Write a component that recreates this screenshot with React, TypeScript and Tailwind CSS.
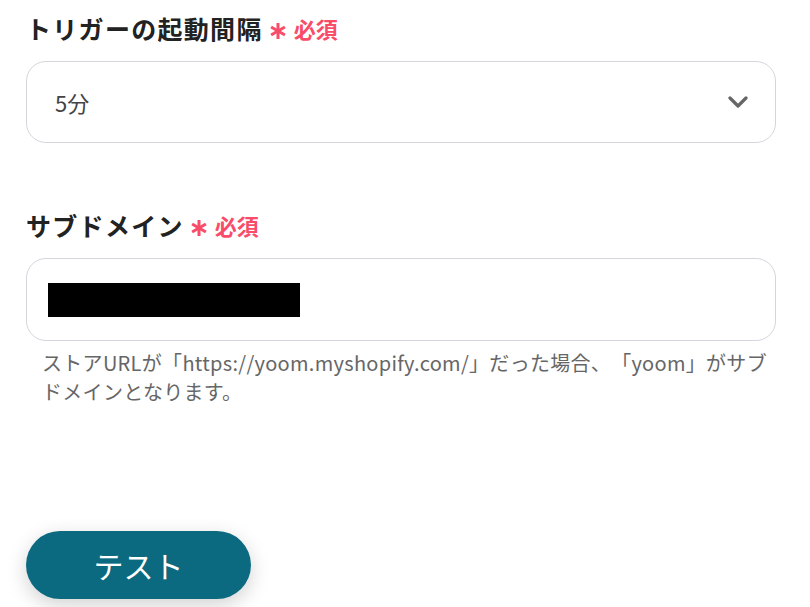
const jp = "font-['Noto_Sans_CJK_JP','Noto_Sans',sans-serif]";

function Required() {
  return (
    <span className="ml-[6px] flex items-center text-[#f84c69] font-bold">
      <svg width="18" height="18" viewBox="0 0 18 18" className="mt-[6px]">
        <g stroke="#f84c69" strokeWidth="3" strokeLinecap="butt">
          <line x1="9" y1="1" x2="9" y2="17" />
          <line x1="2.1" y1="5" x2="15.9" y2="13" />
          <line x1="15.9" y1="5" x2="2.1" y2="13" />
        </g>
      </svg>
      <span className="ml-[7px] text-[22px] leading-none">必須</span>
    </span>
  );
}

function Label({ text }: { text: string }) {
  return (
    <div className="flex items-center h-[36px]">
      <span className="text-[25px] font-bold text-[#222] leading-none tracking-[1.3px]">{text}</span>
      <Required />
    </div>
  );
}

export default function App() {
  return (
    <div className={`${jp} w-[810px] h-[607px] bg-white pl-[26px] pr-[34px] pt-[10px]`}>
      <Label text="トリガーの起動間隔" />
      <div className="mt-[15px] h-[82px] rounded-[20px] border border-[#d3d6dc] flex items-center justify-between pl-[28px] pr-[27px]">
        <span className="text-[22px] text-[#444]">5分</span>
        <svg width="20" height="12" viewBox="0 0 20 12" fill="none">
          <polyline points="2,2 10,10 18,2" stroke="#666" strokeWidth="3.2" strokeLinecap="round" strokeLinejoin="round" />
        </svg>
      </div>

      <div className="mt-[64px]">
        <Label text="サブドメイン" />
      </div>
      <div className="mt-[15px] h-[83px] rounded-[20px] border border-[#d3d6dc] flex items-center pl-[21px]">
        <div className="w-[252px] h-[34px] bg-black" />
      </div>
      <p className="mt-[7px] pl-[16px] text-[20px] leading-[29px] text-[#666] tracking-[0.3px] [text-spacing-trim:space-all]">
        ストアURLが「https://yoom.myshopify.com/」だった場合、「yoom」がサブ
        <br />
        ドメインとなります。
      </p>

      <button className="mt-[125px] w-[225px] h-[68px] rounded-full bg-[#0b6a80] text-white text-[30px] shadow-[0_6px_20px_rgba(0,0,0,0.18)]">
        テスト
      </button>
    </div>
  );
}
